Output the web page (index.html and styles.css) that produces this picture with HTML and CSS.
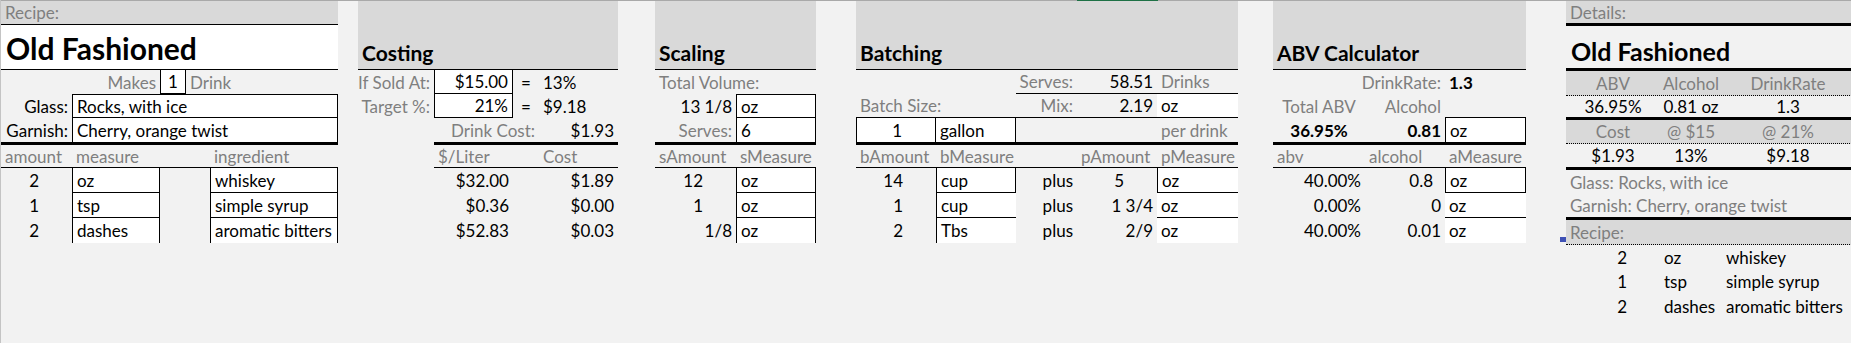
FILE: index.html
```html
<!DOCTYPE html>
<html lang="en">
  <head>
    <meta charset="UTF-8">
    <meta name="viewport" content="width=device-width, initial-scale=1.0">
    <title>Old Fashioned - Recipe Sheet</title>
    <link rel="stylesheet" href="styles.css">
  </head>
  <body>
    <div id="sheet">
      <div class="col-bar"><div class="col-active"></div></div>
      <div class="blocks">

        <!-- recipe entry -->
        <div class="sec recipe">
          <div class="row h24"><div class="hd g bb sp5">Recipe:</div></div>
          <div class="row h45"><div class="w bb sp5 title">Old Fashioned</div></div>
          <div class="row h24">
            <div class="g tr sp2">Makes</div>
            <div class="w bl br bb tc">1</div>
            <div class="g sp2">Drink</div>
          </div>
          <div class="row h24">
            <div class="tr">Glass:</div>
            <div class="box sp4">Rocks, with ice</div>
          </div>
          <div class="row h27">
            <div class="tr bb3">Garnish:</div>
            <div class="w bl br bb3 sp4">Cherry, orange twist</div>
          </div>
          <div class="row h23">
            <div class="g bb">amount</div>
            <div class="g bb">measure</div>
            <div class="bb sp2"></div>
            <div class="g bb">ingredient</div>
          </div>
          <div class="row h25">
            <div class="tr fr">2</div>
            <div class="w bl br bb">oz</div>
            <div class="sp2"></div>
            <div class="w bl br bb">whiskey</div>
          </div>
          <div class="row h25">
            <div class="tr fr">1</div>
            <div class="w bl br bb">tsp</div>
            <div class="sp2"></div>
            <div class="w bl br bb">simple syrup</div>
          </div>
          <div class="row h25">
            <div class="tr fr">2</div>
            <div class="w bl br">dashes</div>
            <div class="sp2"></div>
            <div class="w bl br">aromatic bitters</div>
          </div>
        </div>

        <!-- costing -->
        <div class="sec costing">
          <div class="row h69"><div class="hd bb sp4 sec-title">Costing</div></div>
          <div class="row h24">
            <div class="g tr">If Sold At:</div>
            <div class="w bl br bb tr">$15.00</div>
            <div class="tc">=</div>
            <div>13%</div>
          </div>
          <div class="row h24">
            <div class="g tr">Target %:</div>
            <div class="w bl br bb tr">21%</div>
            <div class="tc">=</div>
            <div>$9.18</div>
          </div>
          <div class="row h27">
            <div></div>
            <div class="g tr bb3 sp2">Drink Cost:</div>
            <div class="tr bb3">$1.93</div>
          </div>
          <div class="row h23">
            <div></div>
            <div class="g bb">$/Liter</div>
            <div class="bb"></div>
            <div class="g bb">Cost</div>
          </div>
          <div class="row h25"><div></div><div class="tr">$32.00</div><div></div><div class="tr">$1.89</div></div>
          <div class="row h25"><div></div><div class="tr">$0.36</div><div></div><div class="tr">$0.00</div></div>
          <div class="row h25"><div></div><div class="tr">$52.83</div><div></div><div class="tr">$0.03</div></div>
        </div>

        <!-- scaling -->
        <div class="sec scaling">
          <div class="row h69"><div class="hd bb sp2 sec-title">Scaling</div></div>
          <div class="row h24"><div class="g sp2">Total Volume:</div></div>
          <div class="row h24">
            <div class="tr">13 1/8</div>
            <div class="box">oz</div>
          </div>
          <div class="row h27">
            <div class="g tr bb3">Serves:</div>
            <div class="w bl br bb3">6</div>
          </div>
          <div class="row h23">
            <div class="g bb">sAmount</div>
            <div class="g bb">sMeasure</div>
          </div>
          <div class="row h25"><div class="tr fr">12</div><div class="w bl br bb">oz</div></div>
          <div class="row h25"><div class="tr fr">1</div><div class="w bl br bb">oz</div></div>
          <div class="row h25"><div class="tr">1/8</div><div class="w bl br">oz</div></div>
        </div>

        <!-- batching -->
        <div class="sec batching">
          <div class="row h69"><div class="hd bb sp5 sec-title">Batching</div></div>
          <div class="row h24">
            <div class="sp2"></div>
            <div class="g tr bb">Serves:</div>
            <div class="tr bb">58.51</div>
            <div class="g bb">Drinks</div>
          </div>
          <div class="row h24">
            <div class="g bb sp2">Batch Size:</div>
            <div class="g tr bb">Mix:</div>
            <div class="tr bb">2.19</div>
            <div class="w bb">oz</div>
          </div>
          <div class="row h27">
            <div class="w bl br bb3 tr fr">1</div>
            <div class="w br bb3">gallon</div>
            <div class="bb3 sp2"></div>
            <div class="g bb3">per drink</div>
          </div>
          <div class="row h23">
            <div class="g bb">bAmount</div>
            <div class="g bb">bMeasure</div>
            <div class="bb"></div>
            <div class="g bb">pAmount</div>
            <div class="g bb">pMeasure</div>
          </div>
          <div class="row h25">
            <div class="tr fr">14</div>
            <div class="w bl br bb">cup</div>
            <div class="tr">plus</div>
            <div class="tr fr">5</div>
            <div class="w bl bb">oz</div>
          </div>
          <div class="row h25">
            <div class="tr fr">1</div>
            <div class="w bl bb">cup</div>
            <div class="tr">plus</div>
            <div class="tr">1 3/4</div>
            <div class="w bb">oz</div>
          </div>
          <div class="row h25">
            <div class="tr fr">2</div>
            <div class="w bl">Tbs</div>
            <div class="tr">plus</div>
            <div class="tr">2/9</div>
            <div class="w">oz</div>
          </div>
        </div>

        <!-- abv -->
        <div class="sec abv">
          <div class="row h69"><div class="hd bb sp3 sec-title">ABV Calculator</div></div>
          <div class="row h24">
            <div class="g tr sp2">DrinkRate:</div>
            <div class="b">1.3</div>
          </div>
          <div class="row h24">
            <div class="g tc">Total ABV</div>
            <div class="g tr">Alcohol</div>
            <div class="bb"></div>
          </div>
          <div class="row h27">
            <div class="b tc bb3">36.95%</div>
            <div class="b tr bb3">0.81</div>
            <div class="w bl br bb3">oz</div>
          </div>
          <div class="row h23">
            <div class="g bb">abv</div>
            <div class="g bb">alcohol</div>
            <div class="g bb">aMeasure</div>
          </div>
          <div class="row h25"><div class="tr">40.00%</div><div class="tr dec1">0.8</div><div class="w bl br bb">oz</div></div>
          <div class="row h25"><div class="tr">0.00%</div><div class="tr">0</div><div class="w bb">oz</div></div>
          <div class="row h25"><div class="tr">40.00%</div><div class="tr">0.01</div><div class="w">oz</div></div>
        </div>

        <!-- printable details card -->
        <div class="sec details">
          <div class="row h25 hd bb3"><div class="g sp3">Details:</div></div>
          <div class="row h45 bb3"><div class="sp3 title small">Old Fashioned</div></div>
          <div class="row h25 hd dot">
            <div class="g tc">ABV</div>
            <div class="g tc">Alcohol</div>
            <div class="g tc">DrinkRate</div>
          </div>
          <div class="row h24 bb3">
            <div class="tc">36.95%</div>
            <div class="tc">0.81 oz</div>
            <div class="tc">1.3</div>
          </div>
          <div class="row h24 hd dot">
            <div class="g tc">Cost</div>
            <div class="g tc">@ $15</div>
            <div class="g tc">@ 21%</div>
          </div>
          <div class="row h26 bb3">
            <div class="tc">$1.93</div>
            <div class="tc">13%</div>
            <div class="tc">$9.18</div>
          </div>
          <div class="row h24"><div class="g sp3">Glass: Rocks, with ice</div></div>
          <div class="row h26 bb3"><div class="g sp3">Garnish: Cherry, orange twist</div></div>
          <div class="row h25 hd dot handle-row">
            <div class="g sp3">Recipe:</div>
            <span class="fill-handle"></span>
          </div>
          <div class="row h24"><div class="tr fr">2</div><div>oz</div><div>whiskey</div></div>
          <div class="row h25"><div class="tr fr">1</div><div>tsp</div><div>simple syrup</div></div>
          <div class="row h25"><div class="tr fr">2</div><div>dashes</div><div>aromatic bitters</div></div>
        </div>

      </div>
    </div>
  </body>
</html>
```

FILE: styles.css
```css
html,
body {
  margin: 0;
}

body {
  background: #f2f2f2;
  font-family: 'Lato', 'Liberation Sans', sans-serif;
  font-size: 17px;
  color: #000;
  overflow: hidden;
}

#sheet {
  width: 1851px;
  height: 343px;
  box-sizing: border-box;
  border-left: 1px solid #c4c4c4;
  overflow: hidden;
}

/* column header edge with the selected column marker */
.col-bar {
  height: 1px;
  background: #a9a9a9;
}

.col-active {
  width: 81px;
  height: 1px;
  margin-left: 1076px;
  background: #1e7145;
}

.blocks {
  display: flex;
  align-items: flex-start;
}

.sec {
  flex: none;
}

.recipe {
  width: 337px;
}

.costing {
  width: 260px;
  margin-left: 20px;
}

.scaling {
  width: 161px;
  margin-left: 37px;
}

.batching {
  width: 382px;
  margin-left: 40px;
}

.abv {
  width: 253px;
  margin-left: 35px;
}

.details {
  width: 288px;
  margin-left: 40px;
}

.row {
  display: grid;
  box-sizing: border-box;
}

.recipe .row {
  grid-template-columns: 71px 88px 26px 24px 128px;
}

.costing .row {
  grid-template-columns: 76px 79px 26px 79px;
}

.scaling .row {
  grid-template-columns: 81px 80px;
}

.batching .row {
  grid-template-columns: 80px 80px 61px 80px 81px;
}

.abv .row {
  grid-template-columns: 92px 80px 81px;
}

.details .row {
  grid-template-columns: 94px 62px 132px;
}

.row > * {
  display: flex;
  align-items: center;
  box-sizing: border-box;
  min-width: 0;
  padding: 0 4px;
  white-space: nowrap;
}

/* row heights */
.h23 { height: 23px; }
.h24 { height: 24px; }
.h25 { height: 25px; }
.h26 { height: 26px; }
.h27 { height: 27px; }
.h45 { height: 45px; }
.h69 { height: 69px; }

/* spans */
.sp2 { grid-column: span 2; }
.sp3 { grid-column: span 3; }
.sp4 { grid-column: span 4; }
.sp5 { grid-column: span 5; }

/* text */
.g { color: #7f7f7f; }
.b { font-weight: bold; }
.tr { justify-content: flex-end; }
.tc { justify-content: center; }
.fr { padding-right: 33px; }
.dec1 { padding-right: 12px; }

/* fills and borders */
.hd { background: #d9d9d9; }
.w { background: #fff; }
.box { background: #fff; border: 1px solid #000; }
.bl { border-left: 1px solid #000; }
.br { border-right: 1px solid #000; }
.bb { border-bottom: 1px solid #000; }
.bb3 { border-bottom: 3px solid #000; }
.dot { border-bottom: 1px dotted #000; }

.title {
  align-items: flex-end;
  padding: 0 5px 3px;
  font-size: 30px;
  font-weight: bold;
}

.title.small {
  font-size: 25px;
  padding-bottom: 2px;
}

.sec-title {
  align-items: flex-end;
  padding-bottom: 4px;
  font-size: 21px;
  font-weight: bold;
}

.handle-row {
  position: relative;
}

.fill-handle {
  position: absolute;
  left: -6px;
  top: 17px;
  width: 6px;
  height: 5px;
  padding: 0;
  background: #3f51b5;
}
```
